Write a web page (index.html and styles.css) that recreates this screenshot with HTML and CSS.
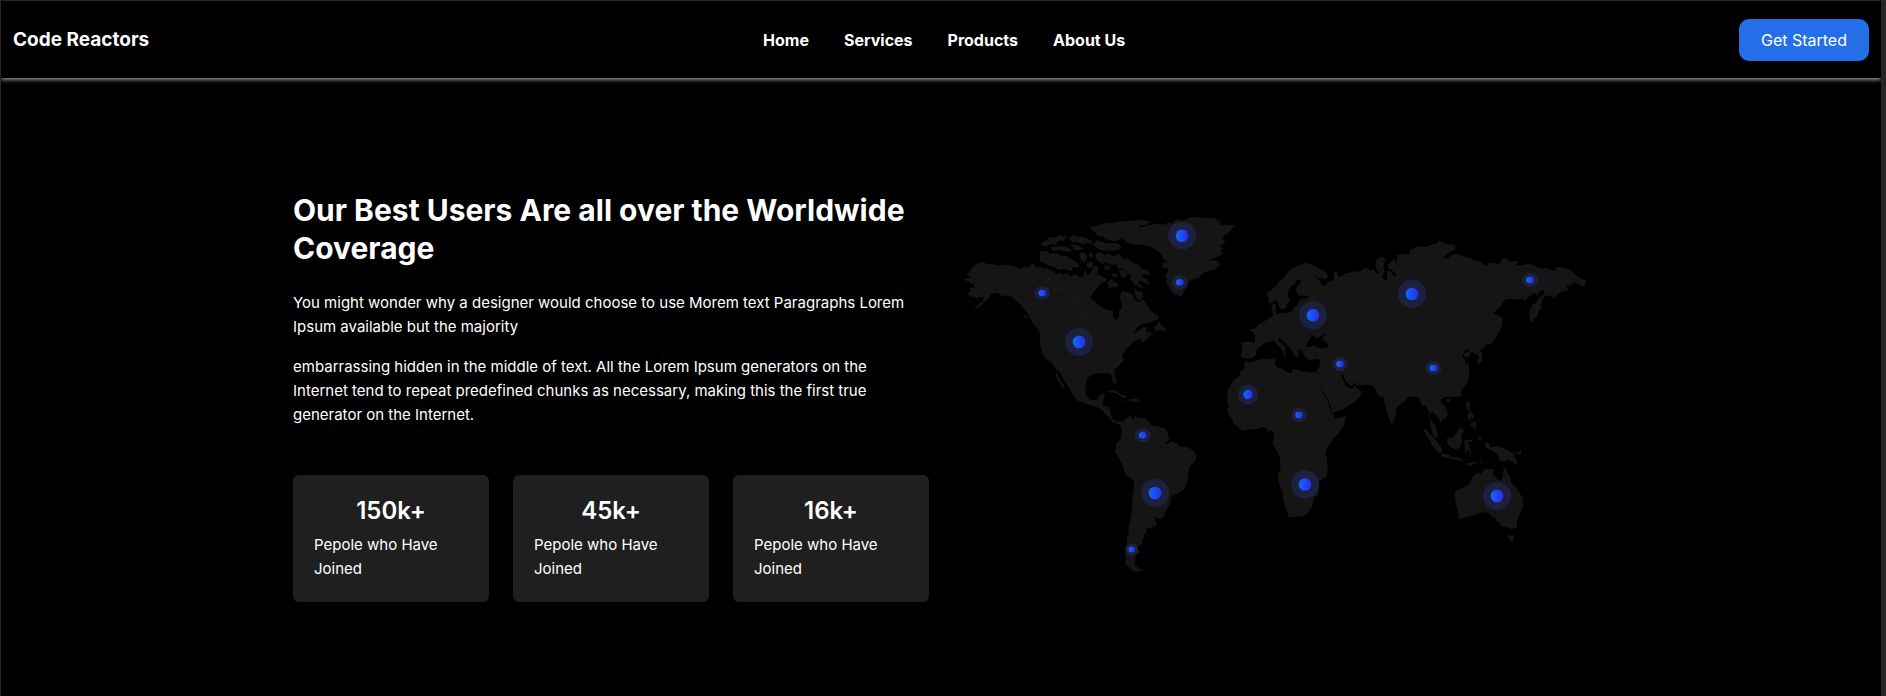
FILE: index.html
```html
<!DOCTYPE html>
<html lang="en">
<head>
<meta charset="utf-8">
<meta name="viewport" content="width=device-width, initial-scale=1">
<title>Code Reactors</title>
<link rel="stylesheet" href="styles.css">
</head>
<body>
<header class="navbar">
  <a class="brand" href="#">Code Reactors</a>
  <nav class="nav">
    <a href="#">Home</a>
    <a href="#">Services</a>
    <a href="#">Products</a>
    <a href="#">About Us</a>
  </nav>
  <button class="cta" type="button">Get Started</button>
</header>
<main class="coverage">
  <section class="intro">
    <h1>Our Best Users Are all over the Worldwide Coverage</h1>
    <p class="lead">You might wonder why a designer would choose to use Morem text Paragraphs Lorem Ipsum available but the majority</p>
    <p class="lead">embarrassing hidden in the middle of text. All the Lorem Ipsum generators on the Internet tend to repeat predefined chunks as necessary, making this the first true generator on the Internet.</p>
    <div class="stats">
      <article class="card"><h2>150k+</h2><p>Pepole who Have Joined</p></article>
      <article class="card"><h2>45k+</h2><p>Pepole who Have Joined</p></article>
      <article class="card"><h2>16k+</h2><p>Pepole who Have Joined</p></article>
    </div>
  </section>
  <svg class="map" viewBox="953 204 636 384" role="img" aria-label="World map of users">
    <defs>
      <linearGradient id="core"><stop offset="0" stop-color="#0c6cff"/><stop offset="1" stop-color="#302ae8"/></linearGradient>
      <g id="pin-l"><circle r="14" class="halo"/><circle r="6.3" fill="url(#core)"/></g>
      <g id="pin-m"><circle r="10" class="halo"/><circle r="4.7" fill="url(#core)"/></g>
      <g id="pin-s"><ellipse rx="7.8" ry="7" class="halo"/><ellipse rx="3.7" ry="3.3" fill="url(#core)"/></g>
      <g id="pin-xs"><circle r="6.3" class="halo"/><circle r="3" fill="url(#core)"/></g>
    </defs>
    <g class="land">
      <!-- North America, Arctic islands, Greenland, Caribbean -->
      <g transform="translate(950 200) scale(.33333)">
        <path d="M62 212L66 202 75 196 82 190 98 186 110 192 125 192 142 196 160 194 190 198 204 204 212 208 220 201 228 200 234 204 240 198 248 188 254 198 262 202 270 200 278 206 290 204 300 210 310 214 318 222 330 218 340 224 352 218 358 227 366 228 376 222 384 228 398 230 404 216 408 212 412 224 420 222 424 214 428 206 436 196 446 205 440 222 455 228 470 236 466 246 450 252 440 266 426 280 422 296 434 304 450 318 468 328 488 334 490 352 500 362 508 350 506 334 518 322 514 306 508 296 512 282 518 272 530 276 548 284 552 296 566 306 578 298 586 304 590 316 596 320 600 330 608 334 616 344 628 350 624 358 612 364 590 370 572 374 560 384 550 400 560 394 570 390 580 380 592 382 588 396 606 398 600 408 586 414 575 425 568 416 550 424 540 438 526 446 524 456 516 464 522 480 510 494 496 506 492 520 499 540 497 556 488 546 486 530 480 522 464 518 450 522 440 520 424 524 410 538 406 560 408 586 420 600 440 600 448 584 464 580 462 596 456 616 476 622 482 640 486 654 500 666 515 664 520 678 505 672 490 668 480 654 465 642 455 628 435 620 410 612 385 604 370 588 366 576 352 556 338 532 328 514 318 508 306 490 288 478 276 456 270 430 270 400 262 384 244 362 232 340 220 326 214 316 196 300 186 290 170 288 150 286 146 278 134 280 124 282 118 292 104 304 90 320 70 330 84 314 98 302 102 292 88 290 80 296 72 288 66 294 50 280 62 276 60 264 76 262 72 254 62 250 56 244 42 240 46 236 62 232 50 222Z"/>
        <path d="M270 156L290 152 300 162 318 158 334 168 352 168 358 176 370 180 386 192 388 202 372 200 362 214 344 206 326 210 312 200 296 196 280 188 270 184ZM272 132L284 124 300 112 316 112 330 106 352 110 340 122 326 124 316 136 300 132 290 140 276 136ZM300 142L330 138 350 140 368 152 350 156 330 150 310 154ZM356 116L366 106 384 108 380 114 400 110 418 120 430 122 426 132 410 128 398 134 384 126 370 128ZM362 132L384 136 400 146 388 152 372 148ZM420 82L440 78 460 70 490 68 520 64 550 62 580 59 602 66 588 76 572 76 560 86 544 94 534 104 518 108 506 120 490 124 476 118 470 122 462 112 446 108 438 100 430 94ZM428 134L440 120 456 126 480 130 500 130 514 138 510 148 488 152 450 150ZM388 160L404 156 412 172 404 188 392 180ZM408 190L426 184 432 198 414 206ZM418 160L430 158 428 172 418 170ZM436 160L452 156 462 166 476 160 490 168 508 162 520 176 536 176 550 190 566 192 574 206 588 210 604 222 590 226 582 222 576 230 592 240 600 252 586 250 570 240 566 250 584 264 568 262 552 252 540 238 544 226 528 220 520 206 504 206 500 194 482 194 470 188 456 192 440 180ZM462 196L482 198 474 212 464 208ZM506 208L520 210 532 224 524 234 512 228ZM472 246L486 236 492 246 506 252 500 262 484 260 476 270ZM484 222L500 220 502 232 488 232ZM550 262L562 274 578 276 580 290 568 302 558 292Z"/>
        <path d="M512 112L528 98 548 92 560 84 580 80 600 74 620 72 640 74 654 68 666 70 680 58 700 62 716 54 740 50 770 54 790 54 812 66 808 74 832 74 856 76 846 84 836 98 824 106 816 116 826 122 818 134 806 138 820 146 812 154 820 160 804 170 786 176 772 182 790 180 806 184 810 194 798 206 780 214 766 216 754 224 746 234 732 238 720 240 714 256 706 270 700 280 694 292 684 284 676 286 664 274 658 260 648 248 650 236 646 226 656 212 652 200 640 206 634 188 654 186 640 178 634 164 622 152 612 146 598 140 580 134 548 134 530 126Z"/>
        <path d="M612 382L622 372 628 364 634 376 646 384 648 396 636 390 618 392ZM572 424L590 410 598 412 580 426ZM470 576L484 570 500 572 514 584 530 588 530 594 514 592 500 580 486 578ZM534 600L544 596 562 596 568 602 556 606 540 604ZM510 602L524 602 522 606ZM570 602L580 604 572 606ZM244 366L256 370 268 376 280 392 272 388 258 380ZM222 340L232 352 226 356ZM318 510L326 530 336 546 345 566 336 564 326 544 318 530Z"/>
        <path class="lake" d="M274 230L284 236 300 234 288 248M310 276L322 268 346 262M338 304L352 292M382 306V320M394 344L408 370M404 342L416 368M442 400L460 390 480 400M472 404L460 432M478 410L498 408M484 438L522 422"/>
      </g>
      <!-- South America -->
      <g transform="translate(1050 390) scale(.33333)">
        <path d="M210 104L218 98 226 88 238 80 244 74 244 86 250 88 252 80 270 84 290 86 292 94 300 98 306 108 320 108 330 112 344 114 352 124 354 138 358 148 346 162 356 162 360 154 372 158 380 160 388 170 400 170 412 172 424 178 436 188 438 204 434 216 424 224 416 238 414 268 408 282 402 300 384 310 372 316 362 322 360 344 350 356 346 366 340 380 330 386 318 384 312 378 314 390 320 396 318 408 308 412 292 414 288 424 290 430 278 434 284 440 276 446 278 460 264 468 262 478 272 486 260 492 256 502 256 514 252 522 262 532 270 538 286 538 270 544 256 546 240 534 228 524 224 516 230 508 224 494 226 484 232 470 230 450 236 430 236 410 240 390 244 374 246 350 248 320 252 300 252 272 240 264 230 256 222 244 216 222 204 200 194 184 198 174 196 166 202 156 212 146 214 132 214 114Z"/>
      </g>
      <!-- Africa -->
      <g transform="translate(1210 350) scale(.33333)">
        <path d="M106 32L118 36 128 36 142 30 160 26 180 28 196 24 196 36 194 46 206 54 220 58 230 66 242 70 248 56 262 60 276 64 300 68 316 66 322 72 316 80 324 96 334 112 340 132 352 150 358 170 366 188 372 196 372 206 392 202 408 198 406 212 402 224 394 240 384 252 370 266 360 280 350 296 346 312 352 328 350 338 354 350 350 378 340 386 328 394 324 404 328 416 324 434 310 444 310 456 304 474 294 488 284 498 260 500 244 502 236 502 232 486 226 470 220 450 218 432 216 420 208 402 204 388 206 370 212 350 210 334 208 318 198 298 188 280 192 260 190 246 180 242 172 246 168 236 160 230 144 236 130 238 120 236 108 240 96 244 84 232 72 220 64 204 56 196 52 180 56 166 50 150 54 138 52 124 60 108 72 88 86 80 92 64 104 54 104 42Z"/>
      </g>
      <!-- Europe, Middle East, India -->
      <g transform="translate(1210 230) scale(.33333)">
        <path fill-rule="evenodd" d="M94 338L110 334 134 338 136 318 126 304 116 300 130 296 140 290 150 280 162 276 170 268 184 260 190 256 186 244 184 232 190 220 198 224 196 240 200 252 214 248 228 250 240 244 248 246 250 232 262 228 264 216 272 206 286 206 300 200 284 196 270 198 262 192 258 180 262 168 272 158 272 150 262 148 254 162 240 172 236 180 234 196 240 212 230 222 228 234 214 238 206 230 204 214 196 212 186 220 176 220 176 206 170 190 184 180 200 166 206 154 220 144 232 128 244 116 262 108 280 102 290 98 298 102 310 106 330 116 346 126 356 140 344 148 328 144 314 138 330 152 334 164 346 168 352 158 364 152 374 146 370 124 382 128 384 140 394 138 406 130 420 128 430 124 450 126 458 118 472 114 484 122 490 118 500 132 506 130 498 114 496 100 500 88 510 82 522 80 526 92 520 108 524 122 516 142 526 152 532 144 530 122 544 124 550 138 560 136 548 122 536 116 532 102 544 96 550 88 560 98 572 96 572 74 610 70 610 490 600 496 584 510 570 524 558 534 558 550 552 572 546 582 540 572 532 550 526 530 520 500 508 500 500 484 490 468 470 464 440 466 434 456 426 470 416 462 406 452 400 436 392 432 396 446 404 460 412 470 420 476 430 474 436 466 440 474 454 484 452 496 440 510 420 524 400 538 380 544 368 550 362 530 352 506 340 484 330 466 320 452 314 438 322 432 318 424 328 410 330 390 318 386 300 390 288 384 280 374 276 358 262 362 266 372 264 382 252 376 244 360 236 350 222 336 206 322 206 332 218 342 230 354 224 362 228 376 220 378 222 366 212 356 200 342 190 330 176 338 164 338 158 346 146 352 138 362 138 376 128 384 110 386 98 384 92 374 98 362ZM288 350L294 336 300 322 310 318 322 324 346 310 336 326 346 334 358 348 344 354 326 354 314 346 300 350Z"/>
      </g>
      <!-- Siberia, China -->
      <g transform="translate(1400 230) scale(.33333)">
        <path d="M-10 74L4 72 20 76 30 68 28 60 44 54 60 48 76 52 90 46 100 42 110 42 116 32 128 38 140 44 156 42 168 48 164 60 150 66 140 74 126 86 144 84 154 76 172 72 190 78 210 84 226 92 240 94 250 102 262 108 264 98 280 98 290 102 302 98 308 86 324 88 330 96 350 92 354 98 346 104 366 106 380 102 402 104 410 112 424 116 436 114 450 118 464 122 470 110 484 112 500 114 512 122 524 130 532 140 546 146 562 154 556 160 556 168 544 168 534 160 520 156 512 164 498 166 508 180 490 184 474 192 462 204 456 198 440 196 428 206 426 222 420 226 426 236 416 242 412 258 404 264 394 280 390 264 388 246 396 226 410 216 414 204 432 192 432 180 420 184 410 196 404 188 384 200 378 212 366 208 350 208 336 206 320 208 312 212 300 230 290 240 280 250 294 256 308 264 306 280 304 292 296 310 290 320 280 336 272 344 262 340 254 352 242 360 246 374 248 392 234 404 230 394 238 382 230 372 214 366 206 380 196 384 190 372 208 362 210 356 196 362 186 376 196 390 196 404 206 416 208 436 200 460 192 470 184 484 184 500 -10 500Z"/>
      </g>
      <!-- South-east Asia, Australia -->
      <g transform="translate(1400 370) scale(.33333)">
        <path d="M-10 -20H206L208 16 200 40 184 60 172 66 160 72 148 74 136 80 124 88 122 96 132 106 140 118 144 132 138 144 128 148 122 158 116 148 106 132 96 124 90 132 92 150 102 162 108 172 114 200 106 204 98 190 92 170 88 140 88 124 82 120 78 104 66 110 62 98 58 84 50 64 42 68 36 76 20 86 8 98 -10 108ZM68 176L80 180 90 192 100 202 112 216 126 236 124 248 116 248 100 232 90 214 80 196ZM122 250L140 252 152 260 170 262 190 270 194 276 170 270 150 266 124 260ZM194 280L206 280 232 274 222 282 210 288ZM236 276L250 270 242 280ZM140 206L150 204 160 200 170 188 180 170 186 178 192 182 184 196 186 214 180 234 166 238 150 230 142 220ZM192 214L198 210 220 208 216 214 202 216 204 224 212 220 206 232 216 248 210 248 202 236 198 250 194 248 196 230ZM236 202L240 198 244 210 238 214ZM200 94L210 96 210 108 206 118 216 124 212 128 202 120 198 108ZM204 130L218 128 224 142 218 148 210 142 212 152 202 146ZM208 166L216 158 226 154 230 164 224 178 216 168ZM190 152L200 140 188 160ZM254 222L262 218 270 222 270 232 280 230 290 228 310 234 326 242 340 250 344 262 350 274 354 286 342 280 330 270 318 270 314 276 298 272 296 262 288 248 274 240 260 234ZM342 246L356 248 366 236 362 252 348 254ZM374 250L388 264 378 256ZM138 88L152 86 150 96 142 98Z"/>
        <path d="M164 366L172 360 184 354 198 350 210 340 216 322 224 314 236 308 242 314 250 300 262 296 274 298 284 300 278 312 290 326 302 334 308 318 312 290 318 296 322 310 330 318 334 340 344 346 354 362 366 380 370 408 360 430 352 446 350 474 342 474 334 478 320 472 304 470 298 458 288 454 284 440 276 444 270 432 256 426 240 428 224 436 210 438 196 442 178 448 174 440 176 430 170 412 166 390ZM324 494L334 498 342 494 340 510 334 516 328 506Z"/>
      </g>
    </g>
    <g class="pins">
      <use href="#pin-l" x="1182" y="235.7"/>
      <use href="#pin-l" x="1079" y="342"/>
      <use href="#pin-l" x="1155" y="493"/>
      <use href="#pin-l" x="1305" y="484.5"/>
      <use href="#pin-l" x="1313" y="315.3"/>
      <use href="#pin-l" x="1412" y="294"/>
      <use href="#pin-l" x="1497" y="496"/>
      <use href="#pin-m" x="1248" y="394.5"/>
      <use href="#pin-s" x="1179.7" y="282.3"/>
      <use href="#pin-s" x="1042.3" y="293"/>
      <use href="#pin-s" x="1142.7" y="435.3"/>
      <use href="#pin-s" x="1299" y="415"/>
      <use href="#pin-s" x="1340" y="364"/>
      <use href="#pin-s" x="1530" y="280"/>
      <use href="#pin-s" x="1433.5" y="368"/>
      <use href="#pin-xs" x="1131.7" y="549.5"/>
    </g>
  </svg>
</main>
</body>
</html>
```
FILE: styles.css
```css
* {
  box-sizing: border-box;
}

body {
  margin: 0;
  min-height: 100vh;
  display: flex;
  flex-direction: column;
  background: #000;
  border: solid #262627;
  border-width: 1px 5px 0 1px;
  color: #fff;
  font-family: Inter, "Liberation Sans", sans-serif;
  font-size: 15px;
  line-height: 24px;
}

a {
  color: inherit;
  text-decoration: none;
}

.navbar {
  display: flex;
  align-items: center;
  justify-content: space-between;
  padding: 18px 12px 17px;
  box-shadow: 0 2px 4px #8c8c8c;
}

.brand {
  font-size: 19px;
  font-weight: 700;
}

.nav {
  display: flex;
  gap: 35px;
  font-size: 16px;
  font-weight: 700;
}

.cta {
  padding: 9px 22px;
  border: 0;
  border-radius: 10px;
  background: #246fe8;
  color: #fff;
  font: inherit;
  font-size: 16px;
}

.coverage {
  flex: 1;
  display: grid;
  grid-template-columns: 1fr 1fr;
  gap: 24px;
  align-items: center;
  width: 100%;
  max-width: 1320px;
  margin: 0 auto;
  padding: 34px 12px 16px;
}

h1 {
  margin: 0 0 24px;
  font-size: 30px;
  font-weight: 700;
  line-height: 38px;
}

p {
  margin: 0 0 16px;
}

.lead {
  padding-right: 12px;
}

.stats {
  display: grid;
  grid-template-columns: repeat(3, 1fr);
  gap: 24px;
  margin-top: 48px;
}

.card {
  padding: 21px;
  border-radius: 6px;
  background: #1f1f1f;
}

.card h2 {
  margin: 0 0 8px;
  font-size: 24px;
  font-weight: 600;
  line-height: 29px;
  text-align: center;
}

.card p {
  margin: 0;
}

.map {
  display: block;
  width: 100%;
}

.land {
  fill: #151515;
}

.lake {
  fill: none;
  stroke: #1a1a1a;
  stroke-width: 5;
}

.halo {
  fill: #1c2140;
}
```
